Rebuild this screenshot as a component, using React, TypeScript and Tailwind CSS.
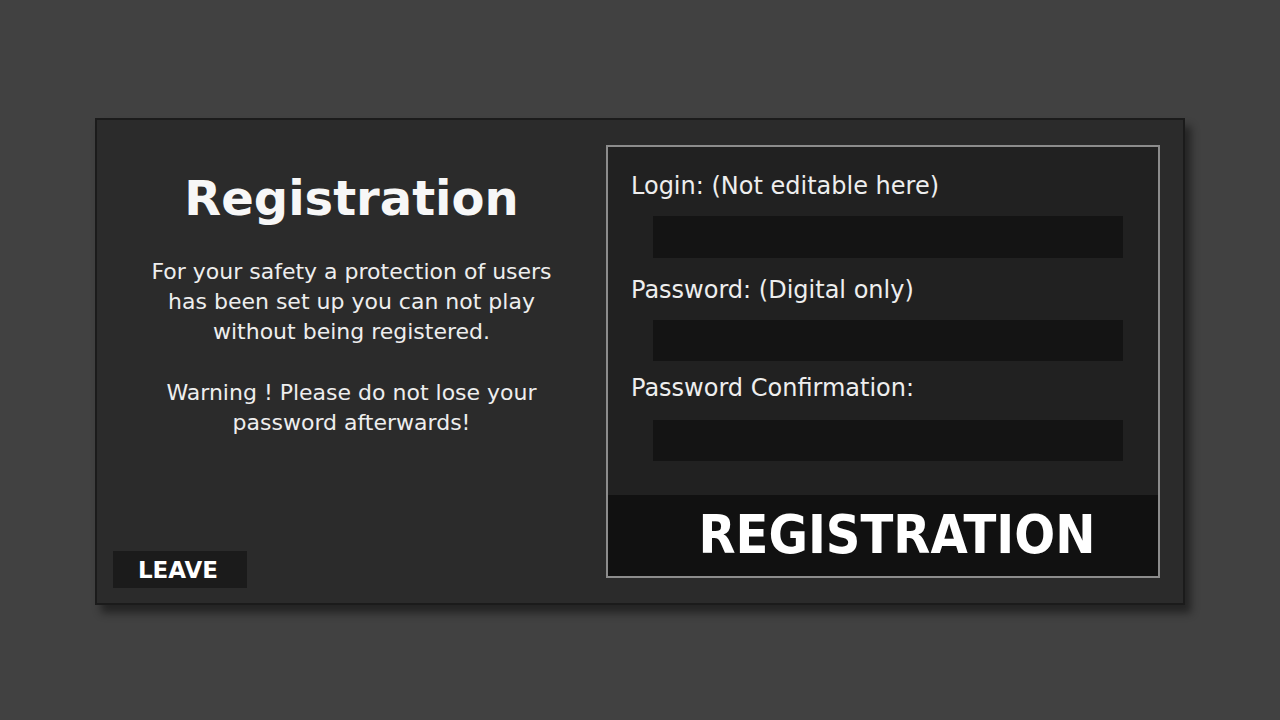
export default function App() {
  const font = { fontFamily: '"DejaVu Sans", Verdana, sans-serif' };
  const cond = { fontFamily: '"DejaVu Sans Condensed", "DejaVu Sans", sans-serif' };
  return (
    <div className="min-h-[720px] w-[1280px] bg-[#414141] pt-[118px] pl-[95px]" style={font}>
      <div className="flex h-[487px] w-[1090px] border-2 border-[#1b1b1b] bg-[#2b2b2b] shadow-[6px_8px_8px_rgba(0,0,0,0.45)]">
        <div className="flex w-[509px] flex-col">
          <h1 className="mt-[50px] text-center text-[48px] font-bold leading-[56px] text-[#f7f7f7]">Registration</h1>
          <div className="mt-[31px] text-center text-[22px] leading-[30px] text-[#eeeeee]">
            <p>For your safety a protection of users</p>
            <p>has been set up you can not play</p>
            <p>without being registered.</p>
            <p className="mt-[31px]">Warning ! Please do not lose your</p>
            <p>password afterwards!</p>
          </div>
          <div className="mt-auto mb-[15px] ml-[16px] flex h-[37px] w-[134px] items-center justify-center bg-[#1b1b1b] text-[23px] font-bold text-white">
            <span className="mr-[4px] mt-[1px]">LEAVE</span>
          </div>
        </div>
        <div className="mt-[25px] flex h-[433px] w-[554px] flex-col border-2 border-[#8c8c8c] bg-[#212121]">
          <div className="mt-[24px] pl-[23px] text-[24px] leading-[30px] text-[#eeeeee]">Login: (Not editable here)</div>
          <div className="mt-[15px] ml-[45px] h-[42px] w-[470px] bg-[#141414]" />
          <div className="mt-[17px] pl-[23px] text-[24px] leading-[30px] text-[#eeeeee]">Password: (Digital only)</div>
          <div className="mt-[15px] ml-[45px] h-[41px] w-[470px] bg-[#141414]" />
          <div className="mt-[12px] pl-[23px] text-[24px] leading-[30px] text-[#eeeeee]">Password Confirmation:</div>
          <div className="mt-[17px] ml-[45px] h-[41px] w-[470px] bg-[#141414]" />
          <div className="mt-auto flex h-[81px] items-center justify-center bg-[#111111] pl-[28px] text-[53.5px] font-bold text-white" style={cond}>
            REGISTRATION
          </div>
        </div>
      </div>
    </div>
  );
}
